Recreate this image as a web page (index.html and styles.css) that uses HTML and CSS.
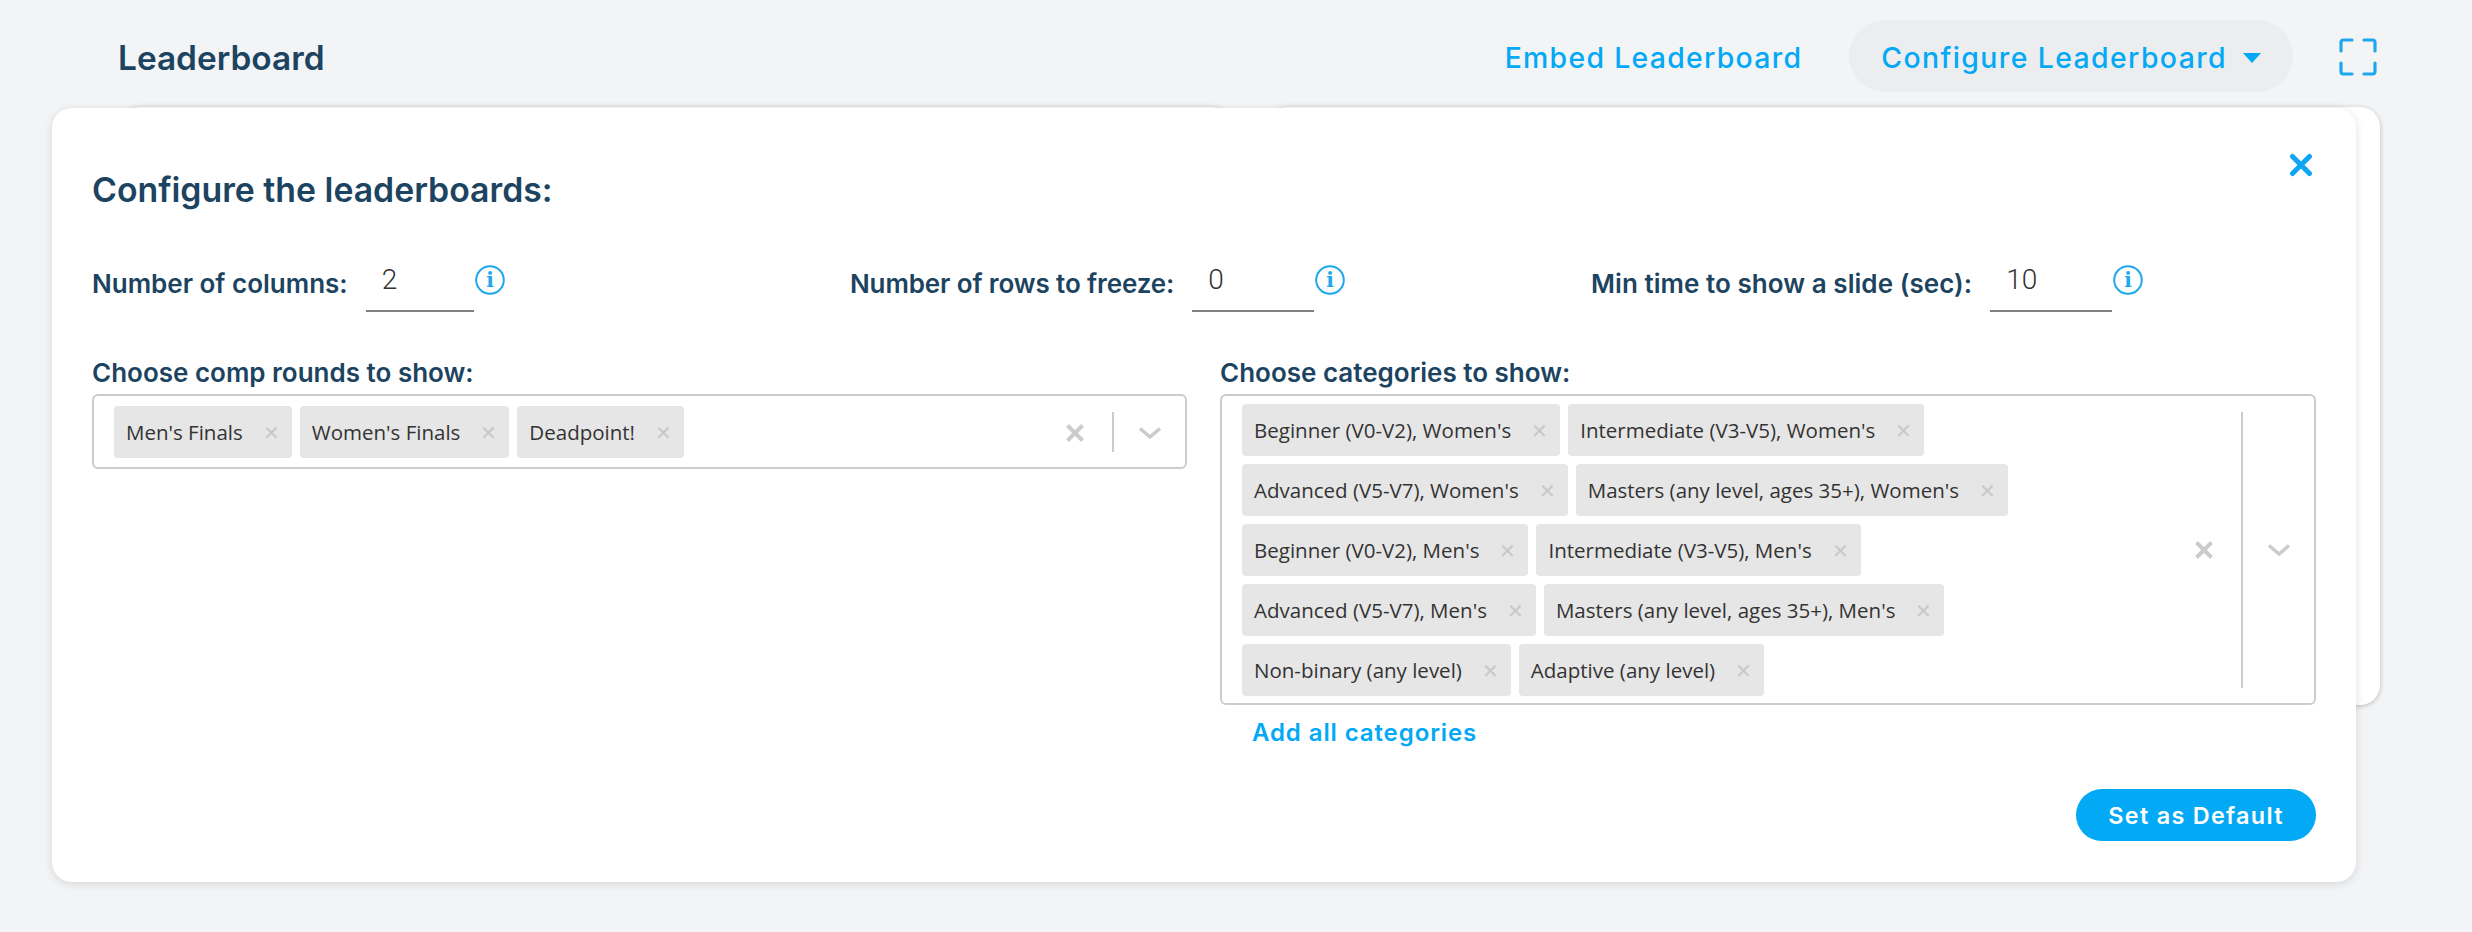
FILE: index.html
```html
<!DOCTYPE html>
<html lang="en">
<head>
<meta charset="utf-8">
<title>Leaderboard</title>
<link rel="stylesheet" href="styles.css">
</head>
<body>
<div class="page">
  <header class="topbar">
    <h1 class="page-title">Leaderboard</h1>
    <div class="top-actions">
      <a class="link-btn">Embed Leaderboard</a>
      <a class="link-btn pill">Configure Leaderboard<span class="caret"></span></a>
      <svg class="fullscreen" viewBox="0 0 38 38" width="38" height="38" fill="none" stroke="#1ea7ec" stroke-width="3.2" stroke-linecap="round" stroke-linejoin="round"><path d="M2 13V4.500Q2 2 4.500 2H13M25 2H33.500Q36 2 36 4.500V13M2 25V33.500Q2 36 4.500 36H13M25 36H33.500Q36 36 36 33.500V25"/></svg>
    </div>
  </header>
  <div class="boards">
    <div class="board"></div>
    <div class="board"></div>
  </div>
  <section class="modal">
    <svg class="close" viewBox="0 0 24 24" width="24" height="24"><path d="M3.500 3.500L20.500 20.500M20.500 3.500L3.500 20.500" stroke="#0ea5f5" stroke-width="5" stroke-linecap="round" fill="none"/></svg>
    <h2 class="modal-title">Configure the leaderboards:</h2>
    <div class="settings">
      <div class="setting s1">
        <span class="label">Number of columns:</span>
        <span class="num w1">2</span>
        <svg class="info" viewBox="0 0 30 30" width="30" height="30"><circle cx="15" cy="15" r="13.8" fill="none" stroke="#1ea7ec" stroke-width="2"/><text x="15" y="22" class="info-i">i</text></svg>
      </div>
      <div class="setting s2">
        <span class="label">Number of rows to freeze:</span>
        <span class="num w2">0</span>
        <svg class="info" viewBox="0 0 30 30" width="30" height="30"><circle cx="15" cy="15" r="13.8" fill="none" stroke="#1ea7ec" stroke-width="2"/><text x="15" y="22" class="info-i">i</text></svg>
      </div>
      <div class="setting s3">
        <span class="label">Min time to show a slide (sec):</span>
        <span class="num w2">10</span>
        <svg class="info" viewBox="0 0 30 30" width="30" height="30"><circle cx="15" cy="15" r="13.8" fill="none" stroke="#1ea7ec" stroke-width="2"/><text x="15" y="22" class="info-i">i</text></svg>
      </div>
    </div>
    <div class="pickers">
      <div class="picker">
        <div class="label pick-label">Choose comp rounds to show:</div>
        <div class="select">
          <div class="tags">
            <span class="tag">Men's Finals<i class="x">✕</i></span>
            <span class="tag">Women's Finals<i class="x">✕</i></span>
            <span class="tag">Deadpoint!<i class="x">✕</i></span>
          </div>
          <div class="controls">
            <svg class="clear" viewBox="0 0 20 20" width="20" height="20"><path d="M2.500 2.500L17.500 17.500M17.500 2.500L2.500 17.500" stroke="#ccc" stroke-width="4" fill="none"/></svg>
            <span class="sep"></span>
            <svg class="chev" viewBox="0 0 24 14" width="24" height="14"><path d="M2 2.500L12 11L22 2.500" stroke="#ccc" stroke-width="3.600" fill="none"/></svg>
          </div>
        </div>
      </div>
      <div class="picker">
        <div class="label pick-label">Choose categories to show:</div>
        <div class="select tall">
          <div class="tags">
            <span class="tag">Beginner (V0-V2), Women's<i class="x">✕</i></span>
            <span class="tag">Intermediate (V3-V5), Women's<i class="x">✕</i></span>
            <span class="brk"></span>
            <span class="tag">Advanced (V5-V7), Women's<i class="x">✕</i></span>
            <span class="tag">Masters (any level, ages 35+), Women's<i class="x">✕</i></span>
            <span class="brk"></span>
            <span class="tag">Beginner (V0-V2), Men's<i class="x">✕</i></span>
            <span class="tag">Intermediate (V3-V5), Men's<i class="x">✕</i></span>
            <span class="brk"></span>
            <span class="tag">Advanced (V5-V7), Men's<i class="x">✕</i></span>
            <span class="tag">Masters (any level, ages 35+), Men's<i class="x">✕</i></span>
            <span class="brk"></span>
            <span class="tag">Non-binary (any level)<i class="x">✕</i></span>
            <span class="tag">Adaptive (any level)<i class="x">✕</i></span>
          </div>
          <div class="controls">
            <svg class="clear" viewBox="0 0 20 20" width="20" height="20"><path d="M2.500 2.500L17.500 17.500M17.500 2.500L2.500 17.500" stroke="#ccc" stroke-width="4" fill="none"/></svg>
            <span class="sep"></span>
            <svg class="chev" viewBox="0 0 24 14" width="24" height="14"><path d="M2 2.500L12 11L22 2.500" stroke="#ccc" stroke-width="3.600" fill="none"/></svg>
          </div>
        </div>
        <a class="add-all">Add all categories</a>
      </div>
    </div>
    <div class="footer"><button class="primary">Set as Default</button></div>
  </section>
</div>
</body>
</html>
```
FILE: styles.css
```css
* { box-sizing: border-box; }
html, body { margin: 0; height: 100%; }
body { background: #f3f4f6; font-family: "Inter", "Liberation Sans", sans-serif; overflow: hidden; }
.page { position: relative; width: 2472px; height: 932px; }

.topbar { height: 108px; display: flex; align-items: flex-start; justify-content: space-between; padding: 20px 96px 0 118px; }
.page-title { margin: 0; font-size: 33.4px; font-weight: 600; color: #1c4461; line-height: 77px; height: 72px; }
.top-actions { display: flex; align-items: center; height: 72px; }
.link-btn { color: #03a9f4; font-size: 28.4px; font-weight: 500; letter-spacing: 1.3px; white-space: nowrap; padding-top: 3px; }
.pill { margin-left: 47px; height: 72px; border-radius: 36px; background: #ebedef; padding: 3px 32px 0; display: flex; align-items: center; letter-spacing: 1.4px; }
.caret { margin-left: 16px; width: 0; height: 0; border-left: 9px solid transparent; border-right: 9px solid transparent; border-top: 10px solid #03a9f4; }
.fullscreen { margin-left: 46px; margin-right: -1px; margin-top: 1px; }

.boards { display: flex; gap: 36px; padding: 0 92px 0 120px; margin-top: -1px; }
.board { flex: 1; height: 598px; background: #fff; border-radius: 20px; box-shadow: 0 1px 5px rgba(0,0,0,.24); }

.modal { position: absolute; left: 52px; top: 108px; width: 2304px; height: 774px; background: #fff; border-radius: 20px; box-shadow: 0 2px 10px rgba(0,0,0,.12); padding: 58px 40px 0; }
.close { position: absolute; right: 43px; top: 45px; }
.modal-title { margin: 0; font-size: 33.8px; line-height: 48px; font-weight: 600; color: #1c4461; }

.settings { display: flex; margin-top: 48px; height: 64px; }
.setting { display: flex; align-items: flex-start; }
.s1 { width: 758px; }
.s2 { width: 741px; }
.label { font-size: 26px; font-weight: 600; color: #1c4461; white-space: nowrap; line-height: 44px; }
.s2 .label { letter-spacing: -0.12px; }
.s3 .label { letter-spacing: 0.05px; }
.num { margin-left: 18px; height: 50px; padding-left: 16px; border-bottom: 2px solid #7f7f7f; font-family: "Roboto", sans-serif; font-size: 28px; font-weight: 300; line-height: 36px; color: #333; }
.w1 { width: 108px; }
.w2 { width: 122px; }
.info { flex: none; margin-top: 3px; margin-left: 1px; }
.info-i { font-family: "DejaVu Serif", serif; font-size: 20px; font-weight: 700; fill: #1ea7ec; text-anchor: middle; }

.pickers { display: grid; grid-template-columns: 1095px 1096px; column-gap: 33px; margin-top: 30px; }
.pick-label { line-height: 34px; height: 34px; margin-bottom: 4px; }
.select { display: flex; min-height: 75px; border: 2px solid #ccc; border-radius: 6px; background: #fff; padding: 10px 0 9px 20px; }
.tall { height: 311px; padding-top: 8px; }
.tags { flex: 1; display: flex; flex-wrap: wrap; gap: 8px; align-content: flex-start; }
.brk { flex-basis: 100%; height: 0; }
.tall .tags { gap: 0 8px; }
.tall .tag { margin-bottom: 8px; }
.tag { height: 52px; display: inline-flex; align-items: center; background: #e6e6e6; border-radius: 4px; padding: 0 12px; font-family: "Open Sans", sans-serif; font-size: 20.5px; color: #333; white-space: nowrap; }
.x { margin-left: 20px; font-style: normal; font-size: 20px; color: #c8c8c8; }
.controls { display: flex; align-items: center; flex: none; align-self: stretch; }
.clear { margin: 2px 27px 0 0; }
.sep { width: 2px; align-self: stretch; margin: 6px 0; background: #ccc; }
.chev { margin: 2px 23px 0 24px; }
.tall .sep { margin-top: 8px; }

.add-all { display: block; margin: 13px 0 0 32px; font-size: 24px; font-weight: 600; color: #03a9f4; letter-spacing: 0.9px; line-height: 30px; }
.footer { display: flex; justify-content: flex-end; margin-top: 41px; }
.primary { width: 240px; height: 52px; border: 0; border-radius: 26px; background: #03a9f4; color: #fff; font-family: "Inter", sans-serif; font-size: 23.4px; font-weight: 600; letter-spacing: 1.3px; }
```
